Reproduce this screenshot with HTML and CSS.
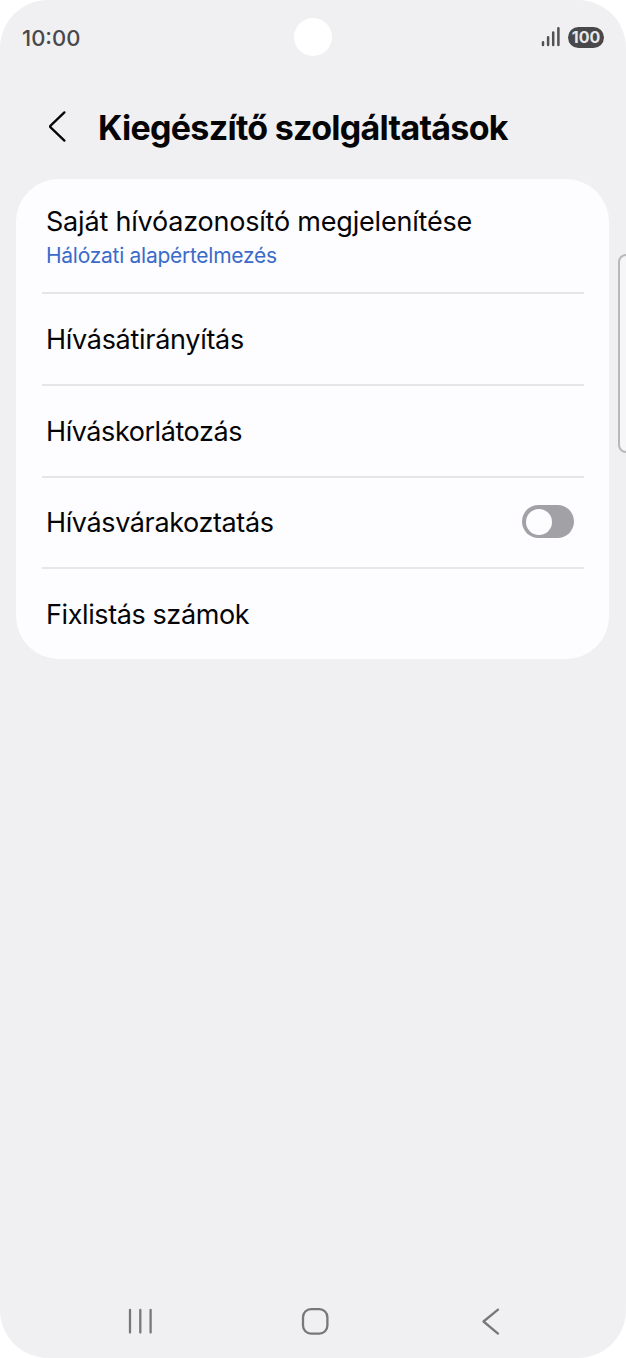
FILE: index.html
```html
<!DOCTYPE html>
<html lang="hu">
<head>
<meta charset="utf-8">
<title>Kiegészítő szolgáltatások</title>
<link rel="stylesheet" href="styles.css">
</head>
<body>
<div class="screen">
  <header class="status">
    <span class="clock">10:00</span>
    <span class="camera"></span>
    <div class="indicators">
      <svg class="signal" width="20" height="20" viewBox="0 0 20 20"><path d="M2 15.200v2.800M7.100 10.200v7.800M12.200 5.500v12.500M17.400 1.200v16.800"/></svg>
      <span class="battery"><span class="level">100</span></span>
    </div>
  </header>
  <div class="titlebar">
    <svg class="back" width="20" height="34" viewBox="0 0 20 34"><path d="M17.400 3.400 3.600 16.600q-1 .9 0 1.800L17.400 31.600"/></svg>
    <h1 class="title">Kiegészítő szolgáltatások</h1>
  </div>
  <main class="card">
    <div class="row row-tall">
      <div><div class="label l1">Saját hívóazonosító megjelenítése</div><div class="sub">Hálózati alapértelmezés</div></div>
    </div>
    <div class="row"><div class="label l2">Hívásátirányítás</div></div>
    <div class="row"><div class="label l3">Híváskorlátozás</div></div>
    <div class="row"><div class="label l4">Hívásvárakoztatás</div><span class="switch"><span class="knob"></span></span></div>
    <div class="row row-last"><div class="label l5">Fixlistás számok</div></div>
  </main>
  <span class="edge"></span>
  <nav class="nav">
    <svg class="key" width="30" height="30" viewBox="0 0 30 30"><path d="M5 4v22.500M15.300 4v22.500M25.600 4v22.500"/></svg>
    <svg class="key" width="30" height="30" viewBox="0 0 30 30"><rect x="3" y="3.200" width="24.400" height="24.400" rx="8"/></svg>
    <svg class="key" width="30" height="30" viewBox="0 0 30 30"><path d="M23 3.600 8.500 15.500 23 27.600"/></svg>
  </nav>
</div>
</body>
</html>
```
FILE: styles.css
```css
body { margin: 0; background: #fff; font-family: Inter, "Liberation Sans", sans-serif; color: #050507; }
.screen { position: relative; box-sizing: border-box; width: 626px; height: 1358px; display: flex; flex-direction: column; background: #f0f0f2; border-radius: 48px; overflow: hidden; }
.status { display: grid; grid-template-columns: 1fr 38px 1fr; align-items: center; height: 73px; padding: 0 22px; color: #48484a; }
.clock { font-size: 22px; font-weight: 500; white-space: nowrap; padding-top: 2px; }
.camera { width: 38px; height: 38px; border-radius: 50%; background: #fff; }
.indicators { display: flex; justify-content: flex-end; align-items: center; gap: 7px; padding-top: 1px; }
.signal path { fill: none; stroke: #525254; stroke-width: 2.5; stroke-linecap: round; }
.battery { display: flex; align-items: center; justify-content: center; width: 36px; height: 21px; border-radius: 11px; background: #48484a; color: #e8e8ea; font-size: 16px; font-weight: 700; line-height: 21px; }
.titlebar { display: flex; align-items: center; height: 106px; padding-left: 47px; gap: 31px; }
.back path { fill: none; stroke: #050507; stroke-width: 2.3; stroke-linecap: round; }
.title { margin: 0; padding-top: 2px; font-size: 34px; font-weight: 700; letter-spacing: -0.720px; white-space: nowrap; }
.card { box-sizing: border-box; width: 593px; height: 480px; margin-left: 16px; padding: 0 25px 0 26px; background: #fdfdff; border-radius: 43px; }
.row { box-sizing: border-box; height: 91.800px; display: flex; align-items: center; justify-content: space-between; border-bottom: 2px solid #e6e6e8; padding: 0 10px 0 4px; }
.row-tall { height: 115px; padding-top: 2px; }
.row-last { border-bottom: 0; height: 90px; }
.label { padding-top: 2px; font-size: 27px; line-height: 36px; white-space: nowrap; }
.l1 { letter-spacing: -0.200px; }
.l2 { letter-spacing: -0.290px; }
.l3 { letter-spacing: -0.430px; }
.l4 { letter-spacing: -0.380px; }
.l5 { letter-spacing: -0.400px; }
.sub { padding-top: 1px; font-size: 21px; line-height: 30px; letter-spacing: -0.270px; color: #3b6bc8; white-space: nowrap; }
.switch { box-sizing: border-box; width: 52px; height: 33px; margin-bottom: 1px; padding: 3.500px; border-radius: 17px; background: #a2a1a5; }
.knob { display: block; width: 26px; height: 26px; border-radius: 50%; background: #fdfdff; }
.edge { position: absolute; box-sizing: border-box; left: 618px; top: 254px; width: 20px; height: 199px; border: 2px solid #b8b8ba; border-radius: 8px; background: #f6f6f8; }
.nav { display: flex; justify-content: space-between; align-items: center; height: 74px; margin-top: auto; padding: 0 121px 0 125px; }
.key { fill: none; stroke: #78787a; stroke-width: 2.300; stroke-linecap: round; stroke-linejoin: round; }
```
